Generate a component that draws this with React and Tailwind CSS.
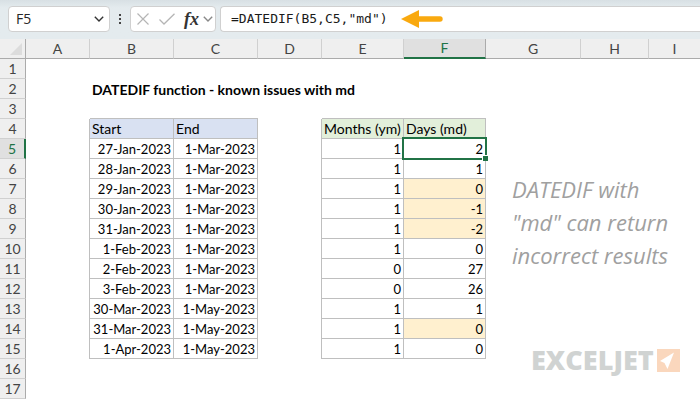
import React from 'react'

const columns = [
  { name: 'A', width: 'w-16' },
  { name: 'B', width: 'w-[84px]' },
  { name: 'C', width: 'w-[84px]' },
  { name: 'D', width: 'w-16' },
  { name: 'E', width: 'w-[82px]' },
  { name: 'F', width: 'w-[82px]' },
  { name: 'G', width: 'w-[95px]' },
  { name: 'H', width: 'w-[68px]' },
  { name: 'I', width: 'w-auto' },
]

const rowCount = 17
const firstDataRow = 5

const data = [
  ['27-Jan-2023', '1-Mar-2023', 1, 2],
  ['28-Jan-2023', '1-Mar-2023', 1, 1],
  ['29-Jan-2023', '1-Mar-2023', 1, 0, true],
  ['30-Jan-2023', '1-Mar-2023', 1, -1, true],
  ['31-Jan-2023', '1-Mar-2023', 1, -2, true],
  ['1-Feb-2023', '1-Mar-2023', 1, 0],
  ['2-Feb-2023', '1-Mar-2023', 0, 27],
  ['3-Feb-2023', '1-Mar-2023', 0, 26],
  ['30-Mar-2023', '1-May-2023', 1, 1],
  ['31-Mar-2023', '1-May-2023', 1, 0, true],
  ['1-Apr-2023', '1-May-2023', 1, 0],
]

const headings = { B: 'Start', C: 'End', E: 'Months (ym)', F: 'Days (md)' }
const fieldIndex = { B: 0, C: 1, E: 2, F: 3 }

function Chevron({ className }) {
  return (
    <svg viewBox="0 0 10 6" className={className} fill="none" stroke="currentColor" strokeWidth="1.4">
      <path d="M0.8 0.8 5 4.9 9.2 0.8" />
    </svg>
  )
}

function FormulaBar() {
  return (
    <div className="flex items-center h-[39px] pl-2 pb-px bg-linear-to-b from-[#d8e0e4] to-[#e4ebee] to-20%">
      <div className="flex items-center w-[102px] h-[26px] shrink-0 pl-[7px] pr-[5px] bg-white border border-[#d0d0d0] rounded">
        <input
          aria-label="Name box"
          defaultValue="F5"
          className="w-full min-w-0 text-sm font-['Open_Sans',sans-serif] text-[#262626] outline-none"
        />
        <button aria-label="Show names" className="shrink-0">
          <Chevron className="w-[10px] h-[6px] text-[#333]" />
        </button>
      </div>

      <div className="flex flex-col gap-[2px] w-5 items-center shrink-0">
        {[0, 1, 2].map(i => (
          <span key={i} className="w-[2px] h-[2px] bg-[#444]" />
        ))}
      </div>

      <div className="flex items-center justify-between w-[86px] h-[26px] shrink-0 pl-[6px] pr-[2px] bg-white border border-[#d0d0d0] rounded">
        <button aria-label="Cancel">
          <svg viewBox="0 0 12 12" className="w-3 h-3" stroke="#b5b5b5" strokeWidth="1.2">
            <path d="M0.5 0.5 11.5 11.5M11.5 0.5 0.5 11.5" />
          </svg>
        </button>
        <button aria-label="Enter">
          <svg viewBox="0 0 16 12" className="w-4 h-3" fill="none" stroke="#b5b5b5" strokeWidth="1.3">
            <path d="M0.5 6.5 5 11 15.5 0.8" />
          </svg>
        </button>
        <button aria-label="Insert function" className="flex items-center gap-1">
          <span className="font-['Liberation_Serif',serif] italic font-bold text-lg leading-5 text-[#333]">fx</span>
          <Chevron className="w-[10px] h-[6px] text-[#888]" />
        </button>
      </div>

      <div className="relative flex items-center grow h-[26px] ml-1 pl-[10px] bg-white border border-r-0 border-[#d0d0d0] rounded-l">
        <input
          aria-label="Formula"
          defaultValue={'=DATEDIF(B5,C5,"md")'}
          className="w-full text-[13px] font-['DejaVu_Sans_Mono',monospace] text-[#1a1a1a] outline-none"
        />
        <svg viewBox="0 0 42 18" className="absolute left-[180px] w-[42px] h-[18px]" fill="#f9a90f">
          <path d="M0 9 18 0V6.3H39a2.7 2.7 0 0 1 0 5.4H18V18Z" />
        </svg>
      </div>
    </div>
  )
}

function Cell({ col, row }) {
  const inTable = col in headings
  const edge = inTable ? 'border-r border-b border-[#bfbfbf]' : ''

  if (row === 2 && col === 'B') {
    return (
      <td colSpan={4} className="px-[2px] pt-px pb-0 font-bold text-sm leading-[18px]">
        DATEDIF function - known issues with md
      </td>
    )
  }
  // bottom edge of row 3 and right edge of A and D close the two tables
  if (row === 3 && inTable) return <td className="border-b border-[#bfbfbf]" />
  if ((col === 'A' || col === 'D') && row >= 4 && row <= 15) {
    return <td className="border-r border-[#bfbfbf]" />
  }
  if (row === 4 && inTable) {
    const fill = col < 'D' ? 'bg-[#d9e1f2]' : 'bg-[#e2efda]'
    return <td className={`px-[2px] pt-px pb-0 text-sm leading-[18px] ${edge} ${fill}`}>{headings[col]}</td>
  }

  const record = data[row - firstDataRow]
  if (!record || !inTable) return <td />

  const selected = col === 'F' && row === 5
  const flagged = col === 'F' && record[4]
  return (
    <td className={`px-[2px] pt-px pb-0 text-right ${edge} ${flagged ? 'bg-[#fff0cf]' : ''} ${selected ? 'relative' : ''}`}>
      {record[fieldIndex[col]]}
      {selected && (
        <>
          <span className="absolute -inset-x-[2px] -top-[2px] -bottom-[2px] border-2 border-[#217346]" />
          <span className="absolute -right-[3px] -bottom-[3px] w-[6px] h-[6px] bg-[#217346] border-t border-l border-white" />
        </>
      )}
    </td>
  )
}

function Sheet() {
  const rows = Array.from({ length: rowCount }, (_, i) => i + 1)
  return (
    <table className="w-full table-fixed border-separate border-spacing-0 whitespace-nowrap text-[13px] leading-[18px] text-black [font-variant-ligatures:none]">
      <colgroup>
        <col className="w-[26px]" />
        {columns.map(c => <col key={c.name} className={c.width} />)}
      </colgroup>
      <thead>
        <tr className="h-5 text-sm leading-[18px] text-[#444]">
          <th className="p-0 bg-[#efefef] border-r border-b border-[#ababab]">
            <svg viewBox="0 0 12 12" className="w-3 h-3 ml-auto mr-[3px]" fill="#dcdcdc">
              <path d="M12 0V12H0Z" />
            </svg>
          </th>
          {columns.map(c => (
            <th
              key={c.name}
              className={`p-0 font-normal border-r last:border-r-0 ${
                c.name === 'F'
                  ? 'bg-[#e0e0e0] text-[#217346] border-b-2 border-b-[#217346] border-r-[#ababab]'
                  : 'bg-[#efefef] border-b border-b-[#ababab] border-r-[#d0d0d0]'
              }`}
            >
              {c.name}
            </th>
          ))}
        </tr>
      </thead>
      <tbody>
        {rows.map(row => (
          <tr key={row} className="h-5">
            <th
              className={`px-0 pt-px pb-0 font-normal text-sm leading-[18px] border-b border-b-[#d0d0d0] ${
                row === 5
                  ? 'bg-[#e0e0e0] text-[#217346] border-r-2 border-r-[#217346]'
                  : 'bg-[#efefef] text-[#444] border-r border-r-[#ababab]'
              }`}
            >
              {row}
            </th>
            {columns
              .filter(c => row !== 2 || !['C', 'D', 'E'].includes(c.name))
              .map(c => <Cell key={c.name} col={c.name} row={row} />)}
          </tr>
        ))}
      </tbody>
    </table>
  )
}

function Logo() {
  return (
    <div className="absolute left-[531px] top-[305px] flex items-center gap-[3px]">
      <span className="font-['Open_Sans',sans-serif] font-extrabold text-[27px] leading-8 text-[#d0d3d2]">
        EXCELJET
      </span>
      <svg viewBox="0 0 23 23" className="w-[23px] h-[23px]">
        <rect width="23" height="23" fill="#fad7bd" />
        <path d="M17 3.5 3 12 7.5 14 10.5 20Z" fill="#fff" />
      </svg>
    </div>
  )
}

export default function App() {
  return (
    <div className="min-h-screen bg-white font-[Lato,sans-serif] overflow-hidden">
      <FormulaBar />
      <main className="relative">
        <Sheet />
        <p className="absolute left-[512px] top-[134px] whitespace-nowrap italic font-['Open_Sans',sans-serif] text-[22px] leading-[33px] text-[#a0a0a0]">
          DATEDIF with
          <br />
          "md" can return
          <br />
          incorrect results
        </p>
        <Logo />
      </main>
    </div>
  )
}
